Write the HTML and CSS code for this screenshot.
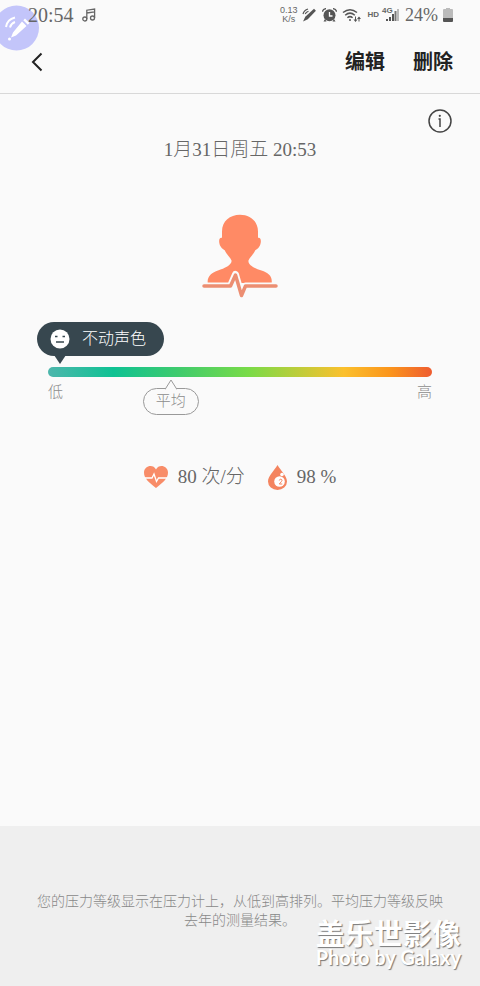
FILE: index.html
```html
<!DOCTYPE html>
<html lang="zh-CN">
<head>
<meta charset="utf-8">
<meta name="viewport" content="width=device-width, initial-scale=1">
<title>压力</title>
<link rel="stylesheet" href="styles.css">
</head>
<body>
<div class="status">
  <span class="clock">20:54</span>
  <svg class="note" width="14" height="14" viewBox="0 0 14 14" fill="none" stroke="#666" stroke-width="1.3"><circle cx="2.8" cy="11" r="2"/><circle cx="10.5" cy="10" r="2"/><path d="M4.8 11V2.2L12.6 1v9M4.8 5l7.8-1.2"/></svg>
  <span class="speed"><span>0.13</span><span>K/s</span></span>
  <svg class="pen-small" width="14" height="14" viewBox="0 0 14 14"><path d="M12 .8l1.900 1.900L5.800 11.200 1 13.500 3.300 8.800z" fill="#555"/><path d="M1 6Q2 2.300 6 1M3.200 6Q4 4.100 6.500 3.200" fill="none" stroke="#555" stroke-width="1.200"/></svg>
  <svg class="alarm" width="15" height="14" viewBox="0 0 15 14"><path d="M.5 3.700Q.8.8 4 .6M14.500 3.700Q14.200.8 11 .6" fill="none" stroke="#555" stroke-width="1.300"/><circle cx="7.500" cy="7.300" r="6" fill="#555"/><path d="M3 11l-1.500 2.500h3M12 11l1.500 2.500h-3" fill="#555"/><path d="M7.500 4v4h3" fill="none" stroke="#fafafa" stroke-width="1.300"/></svg>
  <svg class="wifi" width="20" height="15" viewBox="0 0 20 15" fill="none" stroke="#555" stroke-width="1.500"><path d="M1 4.500Q8 -1.200 15 4.500M3.200 7.200Q8 3 12.800 7.200M5.400 9.800Q8 7.500 10.600 9.800"/><circle cx="8" cy="12" r="1" fill="#555" stroke="none"/><path d="M13.500 8.500v4.500M17 13.500V9.500" stroke-width="1"/><path d="M11.500 11.500h4l-2 2.500zM15 11h4l-2-2.500z" fill="#555" stroke="none"/></svg>
  <span class="hd">HD</span>
  <span class="signal"><span class="net">4G</span><svg width="16" height="14" viewBox="0 0 16 14" fill="#555"><path d="M3 11h2v2H3zM6 9h2v4H6zM9 6h2v7H9z"/><path d="M11.500 3h2v10h-2z" fill="#777"/><path d="M14 1h2v12h-2z" fill="#bbb"/></svg></span>
  <span class="percent">24%</span>
  <svg class="battery" width="10" height="14" viewBox="0 0 10 14"><path d="M3 0h4v1h2q1 0 1 1v8H0V2q0-1 1-1h2z" fill="#bbb"/><path d="M0 10h10v3q0 1-1 1H1q-1 0-1-1z" fill="#555"/></svg>
</div>
<header class="bar">
  <button class="back" aria-label="返回"><svg width="12" height="20" viewBox="0 0 12 20"><path d="M10.500 1.500L2 10l8.500 8.500" fill="none" stroke="#222" stroke-width="2"/></svg></button>
  <button class="action">编辑</button>
  <button class="action">删除</button>
</header>
<main>
  <button class="info" aria-label="信息"><svg width="24" height="24" viewBox="0 0 24 24"><circle cx="12" cy="12" r="11" fill="none" stroke="#444" stroke-width="1.500"/><circle cx="11.800" cy="6.800" r="1.100" fill="#444"/><path d="M10.500 10H12v8" fill="none" stroke="#444" stroke-width="1.500"/></svg></button>
  <time class="date" datetime="01-31T20:53">1月31日周五 20:53</time>
  <svg class="person" width="76" height="85" viewBox="0 0 76 85"><path d="M38 .7C48 .7 56 7 56 17.500v6.300c3.500-.8 3.500 5 1.500 8.500-1.500 2.800-3.500 3.200-4.200 4C51 41 48 43 46.500 46.500c-.8 4 6 8 13 10C66 58.500 70.500 62 69.700 69H5.700C5 62 10 58.500 16 56.500c7-2 14.300-6 13.500-10C28 43 25 41 22.700 36.300c-.7-.8-2.700-1.200-4.200-4-2-3.500-2-9.300 1.500-8.500v-6.300C20 7 28 .7 38 .7z" fill="#ff8a65"/><path d="M2 72h26.500l5-11.500 6 21 4-9.500H74" fill="none" stroke="#fafafa" stroke-width="7" stroke-linejoin="round"/><path d="M2 72h26.500l5-11 6 20.500 4-9.500H74" fill="none" stroke="#ec8e72" stroke-width="3.500" stroke-linejoin="round" stroke-linecap="round"/></svg>
  <section class="gauge">
    <div class="level"><svg width="20" height="20" viewBox="0 0 20 20"><circle cx="10" cy="10" r="9.500" fill="#fff"/><path d="M5 7.500h2.500M12.500 7.500H15M6 13h8" stroke="#37474f" stroke-width="1.500"/></svg><span>不动声色</span></div>
    <div class="track"></div>
    <div class="ends"><span>低</span><span>高</span></div>
    <div class="average"><svg width="12" height="11" viewBox="0 0 12 11"><path d="M0 10.500L6 1l6 9.500" fill="#fafafa" stroke="#999"/></svg>平均</div>
  </section>
  <div class="vitals">
    <svg width="24" height="22" viewBox="0 0 24 22"><path d="M12 22C5 16.500 0 12.500 0 6.500 0 0 9-2.500 12 3.500 15-2.500 24 0 24 6.500 24 12.500 19 16.500 12 22z" fill="#f88c68"/><path d="M1 12h7l2-4 2.500 7.500L14.500 12H23" fill="none" stroke="#fff" stroke-width="1.300"/></svg>
    <span>80 次/分</span>
    <svg class="drop" width="19" height="25" viewBox="0 0 19 25"><path d="M9.500 0C13 6 19 11 19 16.500a9.500 8.500 0 0 1-19 0C0 11 6 6 9.500 0z" fill="#f4845f"/><circle cx="11.500" cy="16.500" r="5.300" fill="#fff"/><circle cx="14" cy="9.500" r="1.800" fill="#fff"/><path d="M11.300 15.500q.2-1.300 1.400-1.300 1.300 0 1.300 1.200 0 .8-2.700 3.600h3" fill="none" stroke="#f4845f"/></svg>
    <span>98 %</span>
  </div>
</main>
<footer>
  <p>您的压力等级显示在压力计上，从低到高排列。平均压力等级反映去年的测量结果。</p>
</footer>
<div class="watermark"><span class="mark-cn">盖乐世影像</span><span class="mark-en">Photo by Galaxy</span></div>
<button class="float" aria-label="手写笔"><svg width="40" height="51" viewBox="0 0 40 51"><circle cx="16.500" cy="28" r="22.500" fill="#c3c5fa"/><path d="M22 21.500l4.500 4.500L16 35.500 11 37.500l2-5zM23.300 20.200l1.700-1.600 4.500 4.500-1.700 1.600z" fill="#fff"/><circle cx="9.500" cy="39" r="1.500" fill="#fff"/><path d="M6 27Q7 19.500 15 17.500M10 27.500Q11 23.500 15 22" fill="none" stroke="#fff" stroke-width="2"/></svg></button>
</body>
</html>
```
FILE: styles.css
```css
* { box-sizing: border-box; }
body {
  position: relative;
  margin: 0;
  min-height: 100vh;
  display: flex;
  flex-direction: column;
  background: #fafafa;
  color: #666;
  font-family: "Liberation Serif", "Noto Sans CJK SC", serif;
  font-weight: 300;
}
button {
  border: 0;
  padding: 0;
  background: none;
  color: inherit;
  font: inherit;
}
svg { display: block; flex: none; }

.status {
  position: relative;
  z-index: 2;
  display: flex;
  align-items: center;
  height: 30px;
  padding: 0 27px 0 28px;
  pointer-events: none;
}
.clock { font-size: 20px; line-height: 24px; }
.note { margin: 0 auto 0 8px; }
.speed {
  display: flex;
  flex-direction: column;
  align-items: center;
  font: 9px/9px "Liberation Sans", sans-serif;
}
.pen-small { margin-left: 5px; }
.alarm { margin-left: 6px; }
.wifi { margin-left: 5px; }
.hd {
  margin-left: 5px;
  font: bold 8px/10px "Liberation Sans", sans-serif;
}
.signal { position: relative; margin-left: 4px; }
.net {
  position: absolute;
  top: -1px;
  left: -1px;
  font: bold 8px/8px "Liberation Sans", sans-serif;
}
.percent { margin-left: 6px; font-size: 18px; line-height: 24px; }
.battery { margin-left: 5px; }

.bar {
  display: flex;
  align-items: center;
  gap: 28px;
  height: 64px;
  padding: 0 27px 0 31px;
  border-bottom: 1px solid #d8d8d8;
}
.back { margin-right: auto; }
.action {
  color: #222;
  font-size: 20px;
  font-weight: 700;
  line-height: 28px;
}

main {
  flex: 1;
  display: flex;
  flex-direction: column;
  align-items: center;
  padding: 15px 28px 48px;
}
.info { align-self: flex-end; }
.date {
  margin-top: 3px;
  font-size: 19px;
  line-height: 28px;
}
.person { margin-top: 50px; }
.gauge {
  position: relative;
  align-self: stretch;
  margin: 23px 20px 0;
}
.level {
  position: relative;
  display: flex;
  align-items: center;
  gap: 12px;
  width: fit-content;
  height: 34px;
  margin-left: -11px;
  padding: 0 18px 0 13px;
  border-radius: 17px;
  background: #37474f;
  color: #fff;
  font-size: 16px;
  line-height: 22px;
}
.level::after {
  content: "";
  position: absolute;
  top: 33px;
  left: 17px;
  border: solid transparent;
  border-width: 9px 6px 0;
  border-top-color: #37474f;
}
.track {
  height: 10px;
  margin-top: 11px;
  border-radius: 5px;
  background: linear-gradient(90deg, #4db6ac, #0fc293 17%, #3fcb6d 34%, #78db48 52%, #fbc02d 77%, #fb951c 89%, #ee5c30);
}
.ends {
  display: flex;
  justify-content: space-between;
  margin-top: 4px;
  color: #8c8c8c;
  font-size: 15px;
  line-height: 22px;
}
.average {
  position: absolute;
  left: 32%;
  bottom: -12px;
  transform: translateX(-50%);
  padding: 0 12px;
  border: 1px solid #999;
  border-radius: 14px;
  background: #fafafa;
  color: #8c8c8c;
  font-size: 15px;
  line-height: 25px;
}
.average svg {
  position: absolute;
  top: -10px;
  left: calc(50% - 6px);
}
.vitals {
  display: flex;
  align-items: center;
  margin-top: 60px;
  font-size: 19px;
  line-height: 28px;
}
.vitals span { margin-left: 10px; }
.drop { margin-left: 23px; }

footer {
  min-height: 160px;
  padding: 66px 32px 40px;
  background: #efefef;
  color: #888;
  text-align: center;
}
footer p { margin: 0; font-size: 14px; line-height: 19px; }

.watermark {
  position: absolute;
  right: 19px;
  bottom: 19px;
  display: flex;
  flex-direction: column;
  align-items: center;
  color: #fff;
  text-shadow: 1px 1px 1px #777;
}
.mark-cn {
  font: bold 29px/30px "Noto Sans CJK SC", sans-serif;
}
.mark-en { font: bold 20px/20px Lato, sans-serif; }
.float {
  position: absolute;
  top: 0;
  left: 0;
}
```
